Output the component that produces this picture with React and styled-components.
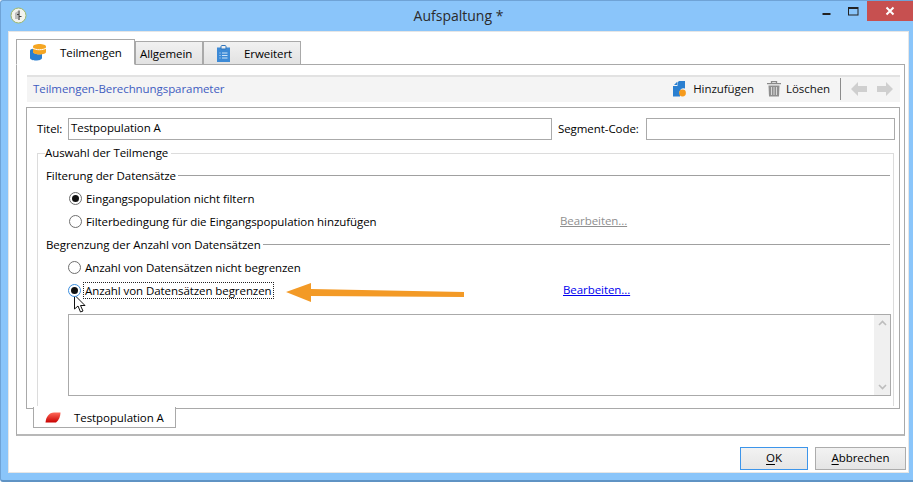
import React from "react";
import styled, { createGlobalStyle } from "styled-components";

const Global = createGlobalStyle`
  html, body { margin: 0; padding: 0; background: #fff; }
  body { font-family: "Open Sans", "Noto Sans", sans-serif; font-size: 11.5px; letter-spacing: -0.07px; color: #000; }
`;
const Page = styled.div`width: 913px; height: 496px; position: relative; overflow: hidden; background: #fff;`;
const Window = styled.div`
  width: 913px; height: 482px; box-sizing: border-box; background: #8ac5fa;
  border: 1px solid #6fa3d6; border-right: 0; border-bottom: 2px solid #5f93c4;
  border-radius: 3px 0 0 3px; display: flex; flex-direction: column; padding: 0 4px 7px 7px;
`;
const TitleBar = styled.div`height: 30px; flex: none; display: flex; align-items: flex-start; position: relative; margin-left: -7px; margin-right: -4px;`;
const AppIcon = styled.svg`width: 17px; height: 17px; margin: 6px 0 0 9px;`;
const Title = styled.div`
  position: absolute; left: 0; right: 0; top: 5px; text-align: center; font-size: 14px; letter-spacing: 0; color: #2b2b2b; padding-left: 3px;
`;
const Controls = styled.div`margin-left: auto; display: flex; align-items: flex-start; position: relative;`;
const Ctl = styled.div`width: 27px; height: 20px; display: flex; align-items: center; justify-content: center;`;
const Close = styled.div`width: 46px; height: 20px; background: #c75050; display: flex; align-items: center; justify-content: center;`;
const Body = styled.div`flex: 1; background: #fff; border: 1px solid #e6e6e6; display: flex; flex-direction: column; padding: 7px 2px 0 7px; min-height: 0;`;
const TabRow = styled.div`display: flex; align-items: flex-end; height: 26px; flex: none; position: relative; z-index: 1; margin-bottom: -1px;`;
const Tab = styled.div`
  box-sizing: border-box; display: flex; align-items: center; height: ${p => p.$active ? 26 : 24}px; width: ${p => p.$w}px;
  border: 1px solid #a9a9a9;
  border-bottom-color: ${p => p.$active ? "#fff" : "#a9a9a9"};
  background: ${p => p.$active ? "#fff" : "linear-gradient(#f1f1f1,#e2e2e2)"};
  padding-left: ${p => p.$pl}px; gap: ${p => p.$gap}px;
`;
const TabPanel = styled.div`
  box-sizing: border-box; width: 889px; height: 372px; flex: none; border: 1px solid #a9a9a9; border-bottom: 2px solid #b8b8b8;
  padding: 10px 4px 0 9px; display: flex; flex-direction: column; position: relative;
`;
const Toolbar = styled.div`
  height: 27px; box-sizing: border-box; flex: none; margin-left: 1px; width: 873px; background: #f4f4f4; border-top: 2px solid #e2e2e2;
  display: flex; align-items: center; padding: 0 7px 2px 6px;
`;
const ToolTitle = styled.div`flex: 1; color: #3f5cc0;`;
const ToolBtn = styled.div`display: flex; align-items: center; gap: ${p => p.$gap}px; color: #111; margin-right: ${p => p.$mr || 0}px;`;
const ToolSep = styled.div`width: 1px; height: 22px; background: #8c8c8c; margin: 0 10px;`;
const ArrowGap = styled.span`width: 10px;`;
const Panel = styled.div`
  box-sizing: border-box; margin-top: 5px; width: 874px; height: 302px; border: 1px solid #a9a9a9;
  padding: 10px 3px 0 10px; display: flex; flex-direction: column; position: relative; z-index: 1;
`;
const FormRow = styled.div`display: flex; align-items: center; height: 22px; flex: none;`;
const Label = styled.div`margin-left: ${p => p.$ml || 0}px; width: ${p => p.$w}px; white-space: nowrap; padding-bottom: 2px;`;
const Input = styled.div`
  box-sizing: border-box; width: ${p => p.$w}px; height: 22px; border: 1px solid #aaa; background: #fff; padding: 0 0 0 2px; line-height: 17px;
`;
const Group = styled.fieldset`
  box-sizing: border-box; margin: 5px 0 0 0; width: 857px; height: 261px; border: 1px solid #dcdcdc; border-bottom: 0; padding: 0; min-width: 0;
`;
const GroupLegend = styled.legend`padding: 0 3px 0 0; margin-left: 7px; line-height: 16px;`;
const Section = styled.div`display: flex; align-items: center; margin-left: 8px; margin-right: 3px; height: 16px; margin-top: ${p => p.$mt}px;`;
const SectionTitle = styled.div`white-space: nowrap;`;
const SectionLine = styled.div`flex: 1; height: 1px; background: #a0a0a0; margin-left: 2px;`;
const OptionRow = styled.div`display: flex; align-items: center; height: 23px; margin-top: ${p => p.$mt || 0}px; padding-left: ${p => p.$pl}px; position: relative;`;
const Radio = styled.span`
  box-sizing: border-box; width: 13px; height: 13px; border-radius: 50%; flex: none; border: 1px solid ${p => p.$hover ? "#3d8fe0" : "#6e6e6e"};
  background: #fff; display: flex; align-items: center; justify-content: center; margin-right: ${p => p.$mr}px;
  &::after { content: ""; display: ${p => p.$on ? "block" : "none"}; width: 7px; height: 7px; border-radius: 50%; background: #111; }
`;
const Focus = styled.span`outline: 1px dotted #222; padding: 0 1px; line-height: 15px;`;
const OptionLink = styled.a`
  position: absolute; left: ${p => p.$x}px; top: 3px; text-decoration: underline; color: ${p => p.$off ? "#8f8f8f" : "#0000ee"};
`;
const TextArea = styled.div`
  box-sizing: border-box; margin: 12px 0 0 30px; width: 823px; height: 82px; border: 1px solid #aaa; display: flex; justify-content: flex-end;
`;
const Scroll = styled.div`
  width: 16px; background: #f0f0f0; display: flex; flex-direction: column; justify-content: space-between; align-items: center; padding: 5px 0; box-sizing: border-box;
`;
const SubTab = styled.div`
  box-sizing: border-box; position: absolute; left: 16px; bottom: 6px; width: 143px; height: 21px; background: #fff; z-index: 2;
  border: 1px solid #a9a9a9; border-top: 0; display: flex; align-items: center; padding-left: 11px; gap: 13px;
`;
const Footer = styled.div`flex: 1; display: flex; justify-content: flex-end; align-items: flex-start; padding-top: 11px;`;
const Button = styled.div`
  box-sizing: border-box; width: ${p => p.$w}px; height: 23px; margin-left: ${p => p.$ml || 0}px; border: 1px solid ${p => p.$def ? "#3d95ea" : "#acacac"};
  background: linear-gradient(#f2f2f2,#e5e5e5); text-align: center; line-height: 20px;
  u { text-underline-offset: 2px; }
`;
const Overlay = styled.svg`position: absolute; left: ${p => p.$x}px; top: ${p => p.$y}px; pointer-events: none;`;

const Arrow = ({ flip }) => (
  <svg width="16" height="14" viewBox="0 0 16 14" style={flip ? { transform: "scaleX(-1)" } : undefined}>
    <path d="M0 7 7 0V4H16V10H7V14Z" fill="#cfcfcf" />
  </svg>
);

export default function App() {
  return (
    <Page>
      <Global />
      <Window>
        <TitleBar>
          <AppIcon viewBox="0 0 17 17">
            <circle cx="8.5" cy="8.5" r="7.5" fill="#f3f3ee" stroke="#9db86a" />
            <path d="M5 6 8 4V12H5Z" fill="#bdbdbd" />
            <path d="M9 3.5V13M9 9.5H11.5M7 7.5H9" stroke="#444" strokeWidth="1.2" fill="none" />
          </AppIcon>
          <Title>Aufspaltung *</Title>
          <Controls>
            <Ctl>
              <svg width="9" height="10" viewBox="0 0 9 10"><rect x="0.5" y="7" width="8" height="2" fill="#222" /></svg>
            </Ctl>
            <Ctl>
              <svg width="11" height="9" viewBox="0 0 11 9"><rect x=".5" y=".5" width="9.5" height="7.5" fill="none" stroke="#222" /><rect x=".5" y=".5" width="9.5" height="1.5" fill="#222" /></svg>
            </Ctl>
            <Close>
              <svg width="10" height="10" viewBox="0 0 10 10"><path d="M1.5 1.5 8.5 8.5M8.5 1.5 1.5 8.5" stroke="#fff" strokeWidth="2" /></svg>
            </Close>
          </Controls>
        </TitleBar>
        <Body>
          <TabRow>
            <Tab $active $w={119} $pl={13} $gap={13}>
              <svg width="17" height="17" viewBox="0 0 17 17">
                <path d="M0 7C0 5.5 1.5 5 3 4.8V8C4.5 10 9 10.8 12 10V14C12 15.6 9 16.5 6 16.5S0 15.6 0 14Z" fill="#2a7fd0" />
                <path d="M3 2.5C3 1 6 0 9.5 0S16 1 16 2.5V8C16 9.5 13 10.5 9.5 10.5S3 9.5 3 8Z" fill="#f5a623" />
                <path d="M3 4C5 6.3 14 6.3 16 4" stroke="#fff" strokeWidth="1" fill="none" />
              </svg>
              Teilmengen
            </Tab>
            <Tab $w={68} $pl={4} $gap={0}>Allgemein</Tab>
            <Tab $w={98} $pl={13} $gap={14}>
              <svg width="13" height="17" viewBox="0 0 13 17">
                <rect x="0" y="2.5" width="13" height="14.5" fill="#3d8ad6" />
                <path d="M4 4V1.5C4 .8 4.5.5 5 .5H8C8.5.5 9 .8 9 1.5V4Z" fill="#f0f0f0" stroke="#2f74bb" />
                <path d="M2.5 8h1M5 8h5.5M2.5 10.5h1M5 10.5h5.5M2.5 13h1M5 13h5.5" stroke="#cfe4f7" />
              </svg>
              Erweitert
            </Tab>
          </TabRow>
          <TabPanel>
            <Toolbar>
              <ToolTitle>Teilmengen-Berechnungsparameter</ToolTitle>
              <ToolBtn $mr={13} $gap={6}>
                <svg width="14" height="16" viewBox="0 0 14 16">
                  <path d="M6 0H12V7.5A4 4 0 0 0 7 13V15.5H0V5L4.5 5V1.5Z" fill="#2a7fd0" />
                  <path d="M4.2 0.8V4H1Z" fill="#2a7fd0" />
                  <circle cx="9.5" cy="12" r="3.4" fill="#f59a1c" />
                </svg>
                Hinzufügen
              </ToolBtn>
              <ToolBtn $gap={5}>
                <svg width="14" height="16" viewBox="0 0 14 16">
                  <path d="M0 2.7H14M4.5 2.7V.7H9.5V2.7" stroke="#8a8a8a" strokeWidth="1.3" fill="none" />
                  <path d="M1.5 4.5H12.5L12 15.5H2Z" fill="#8f8f8f" />
                  <path d="M4.5 6v8M7 6v8M9.5 6v8" stroke="#d8d8d8" />
                </svg>
                Löschen
              </ToolBtn>
              <ToolSep />
              <Arrow />
              <ArrowGap />
              <Arrow flip />
            </Toolbar>
            <Panel>
              <FormRow>
                <Label $w={31}>Titel:</Label>
                <Input $w={484}>Testpopulation A</Input>
                <Label $w={88} $ml={6}>Segment-Code:</Label>
                <Input $w={249} />
              </FormRow>
              <Group>
                <GroupLegend>Auswahl der Teilmenge</GroupLegend>
                <Section $mt={6}>
                  <SectionTitle>Filterung der Datensätze</SectionTitle>
                  <SectionLine />
                </Section>
                <OptionRow $mt={4} $pl={31}>
                  <Radio $on $mr={4} />Eingangspopulation nicht filtern
                </OptionRow>
                <OptionRow $pl={31}>
                  <Radio $mr={4} />Filterbedingung für die Eingangspopulation hinzufügen
                  <OptionLink $x={522} $off>Bearbeiten...</OptionLink>
                </OptionRow>
                <Section $mt={3}>
                  <SectionTitle>Begrenzung der Anzahl von Datensätzen</SectionTitle>
                  <SectionLine />
                </Section>
                <OptionRow $mt={4} $pl={30}>
                  <Radio $mr={4} />Anzahl von Datensätzen nicht begrenzen
                </OptionRow>
                <OptionRow $pl={30}>
                  <Radio $on $hover $mr={3} /><Focus>Anzahl von Datensätzen begrenzen</Focus>
                  <OptionLink $x={525}>Bearbeiten...</OptionLink>
                </OptionRow>
                <TextArea>
                  <Scroll>
                    <svg width="9" height="6" viewBox="0 0 9 6"><path d="M1 5 4.5 1.5 8 5" stroke="#bdbdbd" strokeWidth="1.6" fill="none" /></svg>
                    <svg width="9" height="6" viewBox="0 0 9 6"><path d="M1 1 4.5 4.5 8 1" stroke="#bdbdbd" strokeWidth="1.6" fill="none" /></svg>
                  </Scroll>
                </TextArea>
              </Group>
            </Panel>
            <SubTab>
              <svg width="16" height="11" viewBox="0 0 16 11">
                <defs><linearGradient id="rg" x1="0" y1="0" x2="0" y2="1"><stop offset="0" stopColor="#ff6a5a" /><stop offset="1" stopColor="#c80000" /></linearGradient></defs>
                <path d="M0.5 10.5C1 5 4 .5 9 .5H15.5C15.5 4 14 8 11 10.5Z" fill="url(#rg)" />
              </svg>
              Testpopulation A
            </SubTab>
          </TabPanel>
          <Footer>
            <Button $w={68} $def><u>O</u>K</Button>
            <Button $w={91} $ml={7}><u>A</u>bbrechen</Button>
          </Footer>
        </Body>
      </Window>
      <Overlay $x={286} $y={281} width="180" height="22" viewBox="0 0 180 22">
        <path d="M0 11 25 2V8L178 11V16L25 15V21Z" fill="#f39a26" />
      </Overlay>
      <Overlay $x={74} $y={294} width="13" height="20" viewBox="0 0 13 20">
        <path d="M.5 1V15L4 12 6.5 18 9 17 6.5 11.5H11Z" fill="#fff" stroke="#111" strokeWidth="1" />
      </Overlay>
    </Page>
  );
}
